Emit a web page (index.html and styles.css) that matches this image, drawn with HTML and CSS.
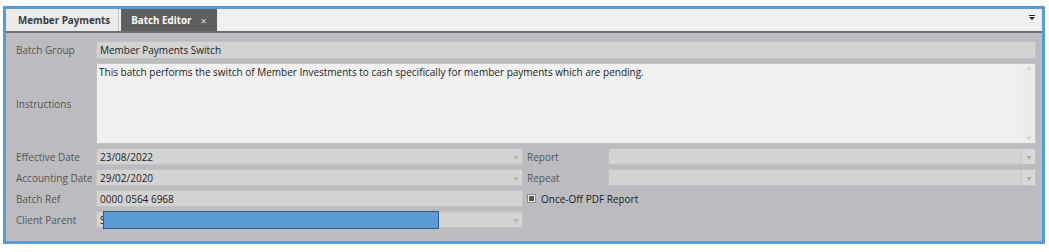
FILE: index.html
```html
<!DOCTYPE html>
<html lang="en">
<head>
    <meta charset="UTF-8">
    <title>Batch Editor</title>
    <link rel="stylesheet" href="styles.css">
</head>
<body>
    <div class="window">
        <div class="tab-bar">
            <div class="tab">Member Payments</div>
            <div class="tab active">Batch Editor <span class="close">&times;</span></div>
            <div class="tab-menu"></div>
        </div>

        <div class="form">
            <div class="label">Batch Group</div>
            <div class="field wide">Member Payments Switch</div>

            <div class="label">Instructions</div>
            <div class="field wide memo">
                <div class="memo-text">This batch performs the switch of Member Investments to cash specifically for member payments which are pending.</div>
                <div class="scroll">
                    <span class="up">&#8963;</span>
                    <span class="down">&#8964;</span>
                </div>
            </div>

            <div class="label">Effective Date</div>
            <div class="field select">23/08/2022<span class="arrow">&#9662;</span></div>
            <div class="label side">Report</div>
            <div class="field select button"><span class="btn">&#9662;</span></div>

            <div class="label">Accounting Date</div>
            <div class="field select">29/02/2020<span class="arrow">&#9662;</span></div>
            <div class="label side">Repeat</div>
            <div class="field select button"><span class="btn">&#9662;</span></div>

            <div class="label">Batch Ref</div>
            <div class="field">0000 0564 6968</div>
            <div class="check-row">
                <span class="check"></span>
                Once-Off PDF Report
            </div>

            <div class="label">Client Parent</div>
            <div class="field select redacted">S<span class="arrow">&#9662;</span><span class="mask"></span></div>
        </div>
    </div>
</body>
</html>
```

FILE: styles.css
```css
body {
    margin: 0;
    padding: 0;
    background-color: #ffffff;
    font-family: 'Open Sans', 'Noto Sans', sans-serif;
    font-size: 10px;
    color: #222222;
}

.window {
    width: 1036px;
    height: 232px;
    margin: 6px 0 0 3px;
    border: 3px solid #5b9bd5;
    background-color: #bcbcc0;
    display: flex;
    flex-direction: column;
}

.tab-bar {
    height: 22px;
    background-color: #f0f0f0;
    border-bottom: 2px solid #6f6f6f;
    display: flex;
    align-items: stretch;
    gap: 2px;
    position: relative;
}

.tab {
    padding: 0 8px 0 12px;
    font-weight: 700;
    color: #3d3d3d;
    background-color: #ebebeb;
    border-right: 1px solid #c8c8c8;
    display: flex;
    align-items: center;
    font-size: 9.8px;
}

.tab.active {
    background-color: #5f5f5f;
    color: #ffffff;
    border-right: none;
    padding: 0 10px 0 10px;
}

.tab .close {
    font-weight: 400;
    margin-left: 9px;
    color: #d8d8d8;
    font-size: 11px;
}

.tab-menu {
    position: absolute;
    right: 7px;
    top: 8px;
    width: 0;
    height: 0;
    border-left: 3px solid transparent;
    border-right: 3px solid transparent;
    border-top: 3px solid #222222;
}

.tab-menu::before {
    content: "";
    position: absolute;
    left: -3px;
    top: -5px;
    width: 6px;
    height: 1px;
    background-color: #222222;
}

.form {
    padding: 8px 6px 0 10px;
    display: grid;
    grid-template-columns: 80px 427px 85px 428px;
    grid-auto-rows: 17px;
    grid-template-rows: 18px 81px;
    row-gap: 4px;
    align-items: center;
}

.label {
    color: #555555;
    white-space: nowrap;
}

.label.side {
    padding-left: 4px;
}

.field {
    height: 100%;
    box-sizing: border-box;
    background-color: #d3d3d3;
    border: 1px solid #c2c2c4;
    padding: 0 3px;
    display: flex;
    align-items: center;
    position: relative;
}

.field.wide {
    grid-column: 2 / 5;
}

.memo {
    background-color: #f0f0f0;
    align-items: stretch;
    padding: 0;
}

.memo-text {
    flex: 1;
    padding: 1px 2px;
}

.scroll {
    width: 12px;
    background-color: #ececec;
    display: flex;
    flex-direction: column;
    justify-content: space-between;
    align-items: center;
    color: #b4b4b4;
    font-size: 9px;
    line-height: 10px;
    padding: 2px 0;
}

.select .arrow {
    margin-left: auto;
    color: #b0b0b0;
    font-size: 8px;
    padding-right: 1px;
}

.button {
    padding: 0;
    justify-content: flex-end;
}

.button .btn {
    width: 13px;
    height: 100%;
    background-color: #d8d8d8;
    border-left: 1px solid #c8c8c8;
    color: #a8a8a8;
    font-size: 8px;
    display: flex;
    align-items: center;
    justify-content: center;
}

.check-row {
    grid-column: 3 / 5;
    display: flex;
    align-items: center;
    padding-left: 5px;
    color: #222222;
    font-size: 10px;
}

.check {
    width: 5px;
    height: 5px;
    border: 1px solid #f4f4f4;
    outline: 1px solid #8a8a8a;
    background-color: #555555;
    margin-right: 6px;
}

.redacted .mask {
    position: absolute;
    left: 6px;
    top: -1px;
    width: 336px;
    height: 18px;
    box-sizing: border-box;
    background-color: #5b9bd5;
    border: 1px solid #2f5b85;
}
```
